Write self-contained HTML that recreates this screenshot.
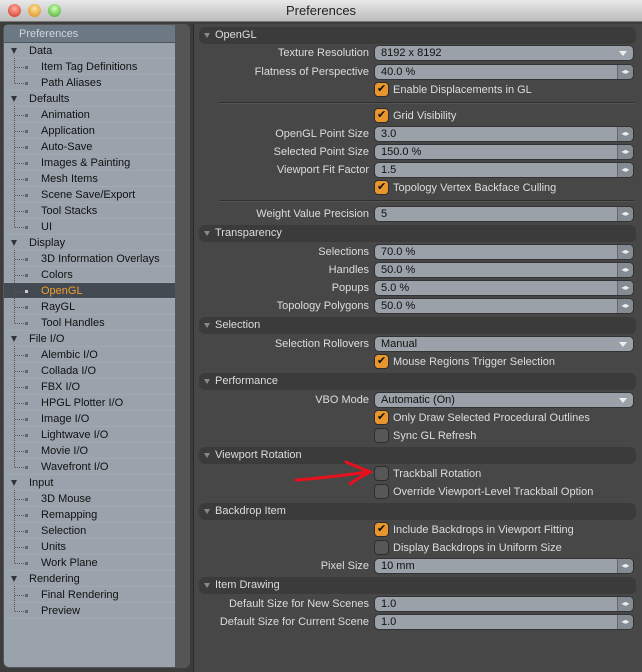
<!DOCTYPE html><html><head><style>
*{margin:0;padding:0;box-sizing:border-box}
body{width:642px;height:672px;background:#3c3c3c;font-family:"Liberation Sans",sans-serif;font-size:11px;position:relative;overflow:hidden}
.tb{position:absolute;left:0;top:0;width:642px;height:22px;background:linear-gradient(#e8e8e8,#bdbdbd);border-bottom:1px solid #777;text-align:center;font-size:13px;line-height:22px;color:#222}
.dot{position:absolute;top:4px;width:13px;height:13px;border-radius:50%}
.lp{position:absolute;left:3px;top:24px;width:187px;height:644px;background:#555;border-radius:6px;overflow:hidden}
.tree{position:absolute;left:1px;top:1px;width:171px;height:642px;background:#9aa3ac;border-radius:5px 0 0 5px}
.th{position:absolute;left:0;top:0;width:171px;height:18px;background:#6c7884;color:#d0d6dc;font-size:11px;line-height:18px;padding-left:15px;border-bottom:1px solid #4d5761}
.r{position:absolute;left:0;width:171px;height:16px;line-height:16px;color:#111;border-bottom:1px solid #a1a9b1}
.hl{background:#434a51;color:#f0a030}
.tri{position:absolute;left:7px;top:5px;width:0;height:0;border-left:3px solid transparent;border-right:3px solid transparent;border-top:6px solid #333}
.c:before{content:"";position:absolute;left:10px;top:-1px;height:17px;border-left:1px dotted #555}
.l:before{height:9px}
.c:after{content:"";position:absolute;left:11px;top:8px;width:9px;border-top:1px dotted #555}
.sq{position:absolute;left:21px;top:7px;width:3px;height:3px;background:#666}
.rp{position:absolute;left:193px;top:24px;width:449px;height:648px;background:#474747;border-left:1px solid #2a2a2a}
.sh{position:absolute;left:5px;width:437px;height:17px;background:#3b3b3b;border-radius:6px;color:#ddd;font-size:11px;line-height:17px;padding-left:16px}
.sh:before{content:"";position:absolute;left:5px;top:6px;border-left:3px solid transparent;border-right:3px solid transparent;border-top:5px solid #888}
.lb{position:absolute;right:273px;color:#ddd;line-height:17px;white-space:nowrap}
.f{position:absolute;left:180px;width:260px;height:16px;background:#9aa1a9;border-radius:5px;color:#111;line-height:15px;padding-left:6px;border:1px solid #333}
.f.s:after{content:"◂▸";position:absolute;right:0;top:0;width:15px;height:14px;background:#848b93;border-left:1px solid #666;font-size:8px;color:#eee;line-height:14px;text-align:center;border-radius:0 4px 4px 0}
.f.d:after{content:"";position:absolute;right:6px;top:5px;border-left:4px solid transparent;border-right:4px solid transparent;border-top:5px solid #eee}
.cb{position:absolute;left:180px;width:15px;height:15px;border-radius:4px;background:#575757;border:1px solid #2d2d2d}
.cb.on{background:#e8952e}
.cb.on:after{content:"✔";position:absolute;left:2px;top:-1px;font-size:11px;color:#111}
.ct{position:absolute;left:199px;color:#ddd;line-height:17px;white-space:nowrap}
.sep{position:absolute;left:25px;width:415px;border-top:1px solid #2f2f2f;border-bottom:1px solid #555}
</style></head><body>
<div class="tb">Preferences
<div class="dot" style="left:8px;background:radial-gradient(circle at 50% 35%,#ffb0a0,#d42a20)"></div>
<div class="dot" style="left:28px;background:radial-gradient(circle at 50% 35%,#ffe0a0,#d98a10)"></div>
<div class="dot" style="left:48px;background:radial-gradient(circle at 50% 35%,#d0ffb0,#3ea52a)"></div></div>
<div class="lp"><div class="tree">
<div class="th">Preferences</div>
<div class="r" style="top:18px"><div class="tri"></div><span style="margin-left:25px">Data</span></div>
<div class="r c" style="top:34px"><div class="sq"></div><span style="margin-left:37px">Item Tag Definitions</span></div>
<div class="r c l" style="top:50px"><div class="sq"></div><span style="margin-left:37px">Path Aliases</span></div>
<div class="r" style="top:66px"><div class="tri"></div><span style="margin-left:25px">Defaults</span></div>
<div class="r c" style="top:82px"><div class="sq"></div><span style="margin-left:37px">Animation</span></div>
<div class="r c" style="top:98px"><div class="sq"></div><span style="margin-left:37px">Application</span></div>
<div class="r c" style="top:114px"><div class="sq"></div><span style="margin-left:37px">Auto-Save</span></div>
<div class="r c" style="top:130px"><div class="sq"></div><span style="margin-left:37px">Images &amp; Painting</span></div>
<div class="r c" style="top:146px"><div class="sq"></div><span style="margin-left:37px">Mesh Items</span></div>
<div class="r c" style="top:162px"><div class="sq"></div><span style="margin-left:37px">Scene Save/Export</span></div>
<div class="r c" style="top:178px"><div class="sq"></div><span style="margin-left:37px">Tool Stacks</span></div>
<div class="r c l" style="top:194px"><div class="sq"></div><span style="margin-left:37px">UI</span></div>
<div class="r" style="top:210px"><div class="tri"></div><span style="margin-left:25px">Display</span></div>
<div class="r c" style="top:226px"><div class="sq"></div><span style="margin-left:37px">3D Information Overlays</span></div>
<div class="r c" style="top:242px"><div class="sq"></div><span style="margin-left:37px">Colors</span></div>
<div class="r c hl" style="top:258px"><div class="sq" style="background:#ccc"></div><span style="margin-left:37px">OpenGL</span></div>
<div class="r c" style="top:274px"><div class="sq"></div><span style="margin-left:37px">RayGL</span></div>
<div class="r c l" style="top:290px"><div class="sq"></div><span style="margin-left:37px">Tool Handles</span></div>
<div class="r" style="top:306px"><div class="tri"></div><span style="margin-left:25px">File I/O</span></div>
<div class="r c" style="top:322px"><div class="sq"></div><span style="margin-left:37px">Alembic I/O</span></div>
<div class="r c" style="top:338px"><div class="sq"></div><span style="margin-left:37px">Collada I/O</span></div>
<div class="r c" style="top:354px"><div class="sq"></div><span style="margin-left:37px">FBX I/O</span></div>
<div class="r c" style="top:370px"><div class="sq"></div><span style="margin-left:37px">HPGL Plotter I/O</span></div>
<div class="r c" style="top:386px"><div class="sq"></div><span style="margin-left:37px">Image I/O</span></div>
<div class="r c" style="top:402px"><div class="sq"></div><span style="margin-left:37px">Lightwave I/O</span></div>
<div class="r c" style="top:418px"><div class="sq"></div><span style="margin-left:37px">Movie I/O</span></div>
<div class="r c l" style="top:434px"><div class="sq"></div><span style="margin-left:37px">Wavefront I/O</span></div>
<div class="r" style="top:450px"><div class="tri"></div><span style="margin-left:25px">Input</span></div>
<div class="r c" style="top:466px"><div class="sq"></div><span style="margin-left:37px">3D Mouse</span></div>
<div class="r c" style="top:482px"><div class="sq"></div><span style="margin-left:37px">Remapping</span></div>
<div class="r c" style="top:498px"><div class="sq"></div><span style="margin-left:37px">Selection</span></div>
<div class="r c" style="top:514px"><div class="sq"></div><span style="margin-left:37px">Units</span></div>
<div class="r c l" style="top:530px"><div class="sq"></div><span style="margin-left:37px">Work Plane</span></div>
<div class="r" style="top:546px"><div class="tri"></div><span style="margin-left:25px">Rendering</span></div>
<div class="r c" style="top:562px"><div class="sq"></div><span style="margin-left:37px">Final Rendering</span></div>
<div class="r c l" style="top:578px"><div class="sq"></div><span style="margin-left:37px">Preview</span></div>
</div></div>
<div class="rp">
<div class="sh" style="top:3px">OpenGL</div>
<div class="lb" style="top:21px">Texture Resolution</div><div class="f d" style="top:21px">8192 x 8192</div>
<div class="lb" style="top:40px">Flatness of Perspective</div><div class="f s" style="top:40px">40.0 %</div>
<div class="cb on" style="top:58px"></div><div class="ct" style="top:58px">Enable Displacements in GL</div>
<div class="sep" style="top:78px"></div>
<div class="cb on" style="top:84px"></div><div class="ct" style="top:84px">Grid Visibility</div>
<div class="lb" style="top:102px">OpenGL Point Size</div><div class="f s" style="top:102px">3.0</div>
<div class="lb" style="top:120px">Selected Point Size</div><div class="f s" style="top:120px">150.0 %</div>
<div class="lb" style="top:138px">Viewport Fit Factor</div><div class="f s" style="top:138px">1.5</div>
<div class="cb on" style="top:156px"></div><div class="ct" style="top:156px">Topology Vertex Backface Culling</div>
<div class="sep" style="top:176px"></div>
<div class="lb" style="top:182px">Weight Value Precision</div><div class="f s" style="top:182px">5</div>
<div class="sh" style="top:201px">Transparency</div>
<div class="lb" style="top:220px">Selections</div><div class="f s" style="top:220px">70.0 %</div>
<div class="lb" style="top:238px">Handles</div><div class="f s" style="top:238px">50.0 %</div>
<div class="lb" style="top:256px">Popups</div><div class="f s" style="top:256px">5.0 %</div>
<div class="lb" style="top:274px">Topology Polygons</div><div class="f s" style="top:274px">50.0 %</div>
<div class="sh" style="top:293px">Selection</div>
<div class="lb" style="top:312px">Selection Rollovers</div><div class="f d" style="top:312px">Manual</div>
<div class="cb on" style="top:330px"></div><div class="ct" style="top:330px">Mouse Regions Trigger Selection</div>
<div class="sh" style="top:349px">Performance</div>
<div class="lb" style="top:368px">VBO Mode</div><div class="f d" style="top:368px">Automatic (On)</div>
<div class="cb on" style="top:386px"></div><div class="ct" style="top:386px">Only Draw Selected Procedural Outlines</div>
<div class="cb" style="top:404px"></div><div class="ct" style="top:404px">Sync GL Refresh</div>
<div class="sh" style="top:423px">Viewport Rotation</div>
<div class="cb" style="top:442px"></div><div class="ct" style="top:442px">Trackball Rotation</div>
<div class="cb" style="top:460px"></div><div class="ct" style="top:460px">Override Viewport-Level Trackball Option</div>
<svg style="position:absolute;left:100px;top:436px" width="80" height="30"><path d="M2 20 Q30 18 74 12 M52 2 Q66 8 76 12 Q64 18 56 24" stroke="#e8101c" stroke-width="3" fill="none" stroke-linecap="round"/></svg>
<div class="sh" style="top:479px">Backdrop Item</div>
<div class="cb on" style="top:498px"></div><div class="ct" style="top:498px">Include Backdrops in Viewport Fitting</div>
<div class="cb" style="top:516px"></div><div class="ct" style="top:516px">Display Backdrops in Uniform Size</div>
<div class="lb" style="top:534px">Pixel Size</div><div class="f s" style="top:534px">10 mm</div>
<div class="sh" style="top:553px">Item Drawing</div>
<div class="lb" style="top:572px">Default Size for New Scenes</div><div class="f s" style="top:572px">1.0</div>
<div class="lb" style="top:590px">Default Size for Current Scene</div><div class="f s" style="top:590px">1.0</div>
</div>
</body></html>
